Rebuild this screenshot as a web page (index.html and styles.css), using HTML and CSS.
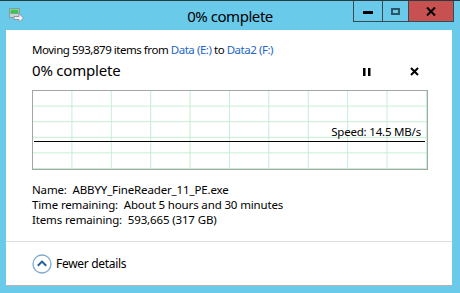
FILE: index.html
```html
<!DOCTYPE html>
<html>
<head>
<meta charset="utf-8">
<link rel="stylesheet" href="styles.css">
</head>
<body>
<div class="window">
  <div class="titlebar">
    <div class="app-icon">
      <svg width="15" height="14" viewBox="0 0 15 14">
        <rect x="0.5" y="0.5" width="10" height="9" fill="#c9d0d6" stroke="#8c979f"/>
        <rect x="1.5" y="1.5" width="8" height="3" fill="#2fd14a"/>
        <rect x="1.5" y="4.5" width="8" height="1" fill="#1c8f2e"/>
        <path d="M5 8.5h5v-3l4.5 4.5-4.5 4.5v-3h-5z" fill="#eef2f5" stroke="#8c979f" stroke-width="1"/>
      </svg>
    </div>
    <div class="title">0% complete</div>
    <div class="caption-buttons">
      <div class="cbtn cbtn-min"><span class="min-glyph"></span></div>
      <div class="cbtn cbtn-max"><span class="max-glyph"></span></div>
      <div class="cbtn cbtn-close">
        <svg width="10" height="9" viewBox="0 0 10 9"><path d="M1 0.5l8 8M9 0.5l-8 8" stroke="#000" stroke-width="2"/></svg>
      </div>
    </div>
  </div>
  <div class="content">
    <div class="main">
      <div class="moving">Moving 593,879 items from <span class="link">Data (E:)</span> to <span class="link">Data2 (F:)</span></div>
      <div class="heading-row">
        <div class="heading">0% complete</div>
        <div class="controls">
          <svg class="pause" width="8" height="8" viewBox="0 0 8 8"><rect x="0" y="0" width="2.5" height="8" fill="#000"/><rect x="5" y="0" width="2.5" height="8" fill="#000"/></svg>
          <svg class="stop" width="9" height="9" viewBox="0 0 9 9"><path d="M1 1l7 7M8 1l-7 7" stroke="#000" stroke-width="2"/></svg>
        </div>
      </div>
      <div class="graph">
        <div class="speed">Speed: 14.5 MB/s</div>
        <div class="speed-line"></div>
      </div>
      <div class="details">
        <div>Name:&nbsp; ABBYY_FineReader_11_PE.exe</div>
        <div>Time remaining:&nbsp; About 5 hours and 30 minutes</div>
        <div>Items remaining:&nbsp; 593,665 (317 GB)</div>
      </div>
    </div>
    <div class="footer">
      <svg class="toggle" width="20" height="20" viewBox="0 0 20 20">
        <circle cx="10" cy="10" r="9" fill="#fff" stroke="#7fa7cc" stroke-width="1.3"/>
        <path d="M5.8 11.8l4.2-4.2 4.2 4.2" fill="none" stroke="#1f5f9c" stroke-width="2"/>
      </svg>
      <span class="fewer">Fewer details</span>
    </div>
  </div>
</div>
</body>
</html>
```

FILE: styles.css
```css
* { box-sizing: border-box; }
html, body { margin: 0; padding: 0; }
body {
  width: 460px;
  height: 293px;
  overflow: hidden;
  font-family: "Noto Sans", "Open Sans", sans-serif;
  color: #000;
}
.window {
  width: 460px;
  height: 293px;
  background: #69caea;
  border-top: 1px solid #2b3a40;
  display: flex;
  flex-direction: column;
}
.titlebar {
  height: 29px;
  display: grid;
  grid-template-columns: 1fr auto 1fr;
  align-items: start;
}
.app-icon {
  padding: 7px 0 0 9px;
  line-height: 0;
}
.title {
  font-size: 15px;
  line-height: 18px;
  padding-top: 6px;
  color: #000;
  letter-spacing: -0.45px;
}
.caption-buttons {
  justify-self: end;
  display: flex;
  margin-right: 6px;
  border: 1px solid #3b4a50;
  border-top: none;
  height: 21px;
}
.cbtn {
  height: 20px;
  display: flex;
  align-items: center;
  justify-content: center;
}
.cbtn-min { width: 29px; border-right: 1px solid #3b4a50; }
.cbtn-max { width: 26px; border-right: 1px solid #3b4a50; }
.cbtn-close { width: 44px; background: #c75050; }
.min-glyph {
  display: block;
  width: 10px;
  height: 3px;
  background: #000;
  margin-top: 3px;
}
.max-glyph {
  display: block;
  width: 9px;
  height: 7px;
  border: 2px solid #2d5568;
  margin-top: 1px;
}
.content {
  flex: 1;
  margin: 0 8px 7px 6px;
  background: #fff;
  border-bottom: 1px solid #b4b4b4;
  display: flex;
  flex-direction: column;
}
.main {
  padding: 12px 26px 0 26px;
  height: 212px;
  border-bottom: 1px solid #dcdcdc;
}
.moving {
  font-size: 11.5px;
  line-height: 16px;
  letter-spacing: -0.46px;
}
.link { color: #1e66c8; }
.heading-row {
  display: flex;
  align-items: center;
  justify-content: space-between;
  height: 22px;
  margin-top: 1px;
}
.heading {
  font-size: 15px;
  line-height: 22px;
  letter-spacing: -0.2px;
}
.controls {
  display: flex;
  align-items: center;
  gap: 39px;
  padding-right: 7px;
  padding-top: 3px;
}
.graph {
  margin-top: 9px;
  width: 396px;
  height: 80px;
  border: 1px solid #a5a5a5;
  background-color: #fff;
  background-image:
    linear-gradient(to right, transparent calc(100% - 1px), #c4eed3 0),
    linear-gradient(to bottom, transparent calc(100% - 1px), #c4eed3 0);
  background-size: 39.4px 100%, 100% 15.6px;
  background-position: 0 0, 0 0;
  display: flex;
  flex-direction: column;
  justify-content: flex-start;
  padding: 33px 2px 0 1px;
}
.speed {
  font-size: 11.5px;
  line-height: 16px;
  text-align: right;
  padding-right: 4px;
  letter-spacing: -0.2px;
}
.speed-line {
  background: #000;
  height: 1.2px;
  margin-top: 1px;
}
.details {
  margin-top: 12px;
  font-size: 11.5px;
  line-height: 15px;
  letter-spacing: -0.14px;
}
.footer {
  flex: 1;
  display: flex;
  align-items: center;
  padding-left: 26px;
  gap: 4px;
}
.toggle { display: block; }
.fewer {
  font-size: 12px;
  line-height: 16px;
  letter-spacing: -0.3px;
}
```
